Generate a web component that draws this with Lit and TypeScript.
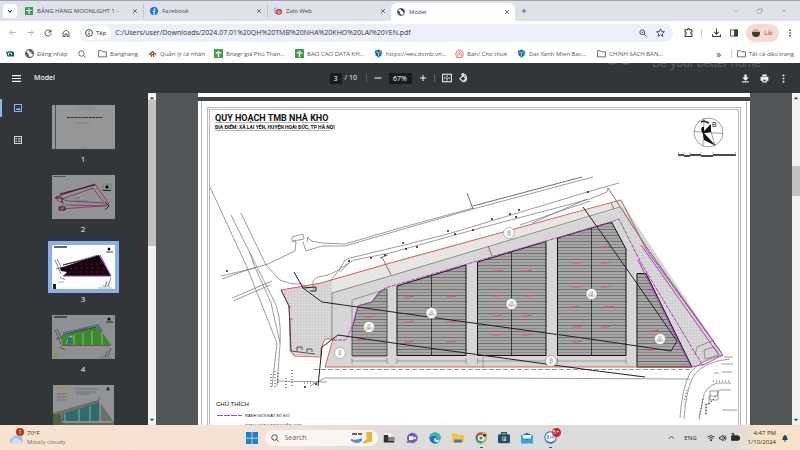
import { LitElement, html, svg, css, TemplateResult } from "lit";
import { customElement, property } from "lit/decorators.js";
import { classMap } from "lit/directives/class-map.js";

type Art = TemplateResult;

const icon = (size: number, body: Art) =>
  html`<svg width=${size} height=${size} viewBox="0 0 16 16" fill="none" stroke="currentColor" stroke-width="1.7" style="flex:none" aria-hidden="true">${body}</svg>`;

const art = {
  sheets: svg`<rect width="16" height="16" rx="1" fill="#3c9f4a" stroke="none"/><path d="M8 3v11M3 7h10" stroke="#fff" stroke-width="2.4"/>`,
  facebook: svg`<circle cx="8" cy="8" r="8" fill="#1b6fe4" stroke="none"/><path d="M11 4.2H9.6Q8.2 4.2 8.2 6v10M5.5 9h5" stroke="#fff" stroke-width="2.2"/>`,
  zalo: svg`<path d="M2 1v9q0 4 5 4" stroke="#3b8ee8" stroke-width="2"/><circle cx="10" cy="9.500" r="6" fill="#d8343c" stroke="none"/><path d="M8 12V9q2-4 4 0v3z" stroke="#fff" stroke-width="1.300"/>`,
  globe: svg`<circle cx="8" cy="8" r="7" stroke-width="1.800"/><path d="M2 5l4 3v3l2 1v3L4 13 1 8zM7 1l1 4 3 1 1 3 3 0-1-5-4-3z" fill="currentColor" stroke="none"/>`,
  close: svg`<path d="M3 3l10 10M13 3L3 13" stroke-width="2"/>`,
  plus: svg`<path d="M8 2v12M2 8h12" stroke-width="2"/>`,
  minus: svg`<path d="M1 8h14" stroke-width="2"/>`,
  chevron: svg`<path d="M3 6l5 5 5-5" stroke-width="2.800"/>`,
  up: svg`<path d="M2 11l6-6 6 6"/>`,
  back: svg`<path d="M15 8H2M8 2L2 8l6 6"/>`,
  forward: svg`<path d="M1 8h13M8 2l6 6-6 6"/>`,
  reload: svg`<path d="M14 9a6 6 0 1 1-2-5.500L14 6M14 1v5H9"/>`,
  home: svg`<path d="M2 7l6-5 6 5v8h-4v-5H6v5H2z"/>`,
  info: svg`<circle cx="8" cy="8" r="6.800"/><path d="M8 7v5M8 4v1.500"/>`,
  zoom: svg`<circle cx="6.500" cy="6.500" r="4.800"/><path d="M10 10l5 5M4.500 6.500h4"/>`,
  search: svg`<circle cx="7" cy="7" r="5.500"/><path d="M11 11l4 4"/>`,
  star: svg`<path d="M8 1.500l2 4.700 5 .4-3.800 3.300 1.200 5L8 12.200l-4.400 2.700 1.200-5L1 6.600l5-.4z" stroke-width="1.500"/>`,
  puzzle: svg`<path d="M2 3h4q0-2 2-2t2 2h4v4q-2 0-2 2t2 2v4H2v-4q2 0 2-2T2 7z" stroke-width="2"/>`,
  download: svg`<path d="M8 1v9M4 7l4 4 4-4M1 11v4h14v-4" stroke-width="1.900"/>`,
  panel: svg`<rect x="1" y="2" width="14" height="12"/><path d="M9 2h6v12H9z" fill="currentColor"/>`,
  dots: svg`<path d="M8 1v3M8 6.500v3M8 12v3" stroke-width="3"/>`,
  folder: svg`<path d="M1 3h5l2 2h7v9H1z" stroke-width="1.500"/>`,
  cen: svg`<path d="M0 4l10-2 6 2v9H3z" fill="#11605f" stroke="none"/><path d="M5 11V6h6v4" stroke="#e8f6f4"/>`,
  roof: svg`<path d="M1 9l7-6 7 6-2 2-5-4-5 4z" fill="#bd5a33" stroke="none"/><path d="M6 14v-4h4v4" stroke="#493128"/>`,
  drop: svg`<path d="M1 3l7-2 7 3-2 7-5 5-5-5z" fill="#2c6c9c" stroke="none"/><path d="M3 4l5 3 6-3M8 7v8" stroke="#8dc8dc"/>`,
  house: svg`<path d="M1 9q2-7 7-8 5 1 7 8l-2 6H3z" stroke="#d77a74"/><path d="M4 8l4-4 4 4M5 13V9h6v4" stroke="#d77a74"/>`,
  menu: svg`<path d="M0 3h16M0 8h16M0 13h16" stroke-width="2.200"/>`,
  fit: svg`<rect x="1" y="2" width="14" height="12"/><path d="M8 4v2M8 7v2M8 10v2M3.500 8h2M10.500 8h2" stroke-width="2.200"/>`,
  rotate: svg`<path d="M8 4l5 5-5 5-5-5z"/><path d="M8 1.500a7 7 0 0 1 2 13M9 0L6 2l3 3"/>`,
  save: svg`<path d="M6 1h4v5h4l-6 6-6-6h4z" fill="currentColor" stroke="none"/><path d="M2 14h12" stroke-width="2"/>`,
  print: svg`<path d="M4 1h8v3H4zM1 5h14v7h-3v3H4v-3H1z" fill="currentColor" stroke="none"/><path d="M6 10h4v3H6z" fill="#323639" stroke="none"/>`,
  thumbs: svg`<rect x="1" y="1" width="14" height="14" stroke-width="2"/><path d="M3 12l3-4 2 2 3-3 2 5z" fill="currentColor" stroke="none"/>`,
  outline: svg`<rect x="1" y="1" width="14" height="14" stroke-width="2"/><path d="M3 5h3M8 5h5M3 8h3M8 8h5M3 11h3M8 11h5"/>`,
  wifi: svg`<path d="M1 6q7-6 14 0M3.500 9q4.500-4 9 0M6 12q2-2 4 0l-2 2z" stroke-width="1.800"/>`,
  sound: svg`<path d="M1 6h3l4-4v12l-4-4H1zM10 5q3 3 0 6M12 3q5 5 0 10"/>`,
  battery: svg`<path d="M1 5h12v8H1zM14 7h2v4h-2zM1 1h4v4" fill="currentColor"/>`,
  bell: svg`<path d="M2 12q2-2 2-6 4-8 8 0 0 4 2 6zM6 13h4v2H6z" fill="#12505f" stroke="none"/>`,
  windows: svg`<path d="M0 0h7.500v7.500H0zM8.500 0H16v7.500H8.500zM0 8.500h7.500V16H0zM8.500 8.500H16V16H8.500z" fill="#1683d4" stroke="none"/>`,
  task: svg`<path d="M1 2h10v8H1z" fill="#f5f5f5" stroke="none"/><path d="M1 4v10h14V7H7V4z" fill="#303030" stroke="none"/><path d="M7 7h8v5H7z" fill="#8a8a8a" stroke="none"/>`,
  chat: svg`<path d="M8 1a7 7 0 1 1-3 13l-4 1 1-4A7 7 0 0 1 8 1z" fill="#6f61c2" stroke="none"/><path d="M4 5.500h6v5H4zM10 8l3-2v4z" fill="#fff" stroke="none"/>`,
  edge: svg`<circle cx="8" cy="8" r="7.500" fill="#1877bd" stroke="none"/><path d="M1 7Q3 0 9 .8q7 1 6.500 7-1 3-5 2.200 1-5-3-5Q3 5 1 7z" fill="#36bcb2" stroke="none"/><path d="M15 10q-7 2-6-3-4 3-1 6 4 2 7-3z" fill="#e1eff3" stroke="none"/>`,
  files: svg`<path d="M0 2h6l2 2h8v10H0z" fill="#f5c23c" stroke="none"/><path d="M3 10h10v4H3z" fill="#2d7cc4" stroke="none"/>`,
  chrome: svg`<circle cx="8" cy="8" r="7.500" fill="#3aa354" stroke="none"/><path d="M1.500 4.300A7.500 7.500 0 0 1 15 5H8L4 9z" fill="#dc473a" stroke="none"/><path d="M15 5q1 7-6 10.500L12 8 9 5z" fill="#f2c332" stroke="none"/><circle cx="8" cy="8" r="3.200" fill="#397fe5" stroke="#fff"/><circle cx="12.500" cy="3" r="3" fill="#c9b968" stroke="none"/><path d="M10 3h5v3h-4z" fill="#3c372b" stroke="none"/>`,
  store: svg`<path d="M5 3V1h6v2" stroke="#1c597e"/><rect y="3" width="16" height="12" rx="2" fill="#1b4f78" stroke="none"/><path d="M5 6h3v3H5z" fill="#e26a42" stroke="none"/><path d="M8 6h3v3H8z" fill="#84b842" stroke="none"/><path d="M5 9h3v3H5z" fill="#3da2dc" stroke="none"/><path d="M8 9h3v3H8z" fill="#ebbb3a" stroke="none"/>`,
  mail: svg`<path d="M0 5l8-4 8 4v10H0z" fill="#186eaf" stroke="none"/><path d="M2 4h12v5H2z" fill="#e8f3f8" stroke="none"/><path d="M0 6l8 5 8-5v9H0z" fill="#36a6dc" stroke="none"/>`,
  zaloApp: svg`<circle cx="8" cy="8" r="7" fill="#f3f8ff" stroke="#2774cf" stroke-width="1.300"/><path d="M4 6h2l-2 3h2M8 7v2M10 6v3M12 7v2" stroke="#2774cf" stroke-width="1"/><path d="M2 11q6 5 12 0-3 5-6 4-4 0-6-4z" fill="#2774cf" stroke="none"/>`,
  cloud: svg`<path d="M3 14a3 3 0 0 1 0-6q2-5 6-2 5-1 5 3 2 4-1 5z" fill="#9fbfef" stroke="none"/><path d="M3 14a3 3 0 0 1 1-5q4-3 6 1 4 0 4 4z" fill="#cfe0fb" stroke="none"/>`,
};

/* Site outline shared by the thumbnails, on a 63 x 44 sheet */
const miniRoads = svg`<g fill="none" stroke="#333" stroke-width=".6"><path d="M3 15l6 14M5 14l6 12M4 24l7-2M11 20L46 10M8 32l5 3M55 36l-2 6M59 33l-3 8"/><path d="M11 20L45 12" stroke-width="1.200"/><path d="M2 2h13" stroke-width="1.500"/></g><circle cx="57" cy="4" r="1.500" fill="#111"/><path d="M54 7h7" stroke="#111" stroke-width=".8"/>`;

const thumbs: Art[] = [
  svg`<rect width="63" height="44" fill="#949698"/><path d="M3.500 0v44" stroke="#333" stroke-width=".7"/><path d="M26 2h18M29 4h13M24 18h14M31 42h4" stroke="#7d7f81" stroke-width=".8"/><path d="M15 12.500h36" stroke="#333" stroke-width="1.200" stroke-dasharray="3 .6"/>`,
  svg`<rect width="63" height="44" fill="#929395"/><path d="M1 1.500h13" stroke="#555" stroke-width="1"/><path d="M4 22L43 9 57 29 49 31 8 34 12 28 6 26z" fill="none" stroke="#ad3159" stroke-width="1"/><path d="M10 24L41 13 52 28 15 26zM4 22l5-1M8 20L43 9M13 30l42 1" fill="none" stroke="#6f2f64" stroke-width=".8"/><path d="M8 19l35-9M3 23h7v4M7 32h6v3H7zM53 27l4 4-4 4" fill="none" stroke="#222" stroke-width="1"/><path d="M24 26h12M22 23h6" stroke="#58608e" stroke-width=".7"/><path d="M51 9h8v6h-8z" fill="none" stroke="#666" stroke-width=".5"/><circle cx="55" cy="12" r="1.700" fill="#111"/><path d="M51 15.500h8" stroke="#222"/>`,
  svg`<rect width="63" height="44" fill="#fff"/>${miniRoads}<path d="M8 23L47 10 59 31 11 31 15 27 9 26z" fill="#170612"/><path d="M48 10l11 21M11 31h48" stroke="#a633a6" stroke-width="1"/><path d="M18 23h34M17 27h36M28 19h20" stroke="#9b2348" stroke-width=".8" stroke-dasharray="1.500 4"/><path d="M1 39h3v5H1z" fill="#222"/><path d="M46 43h14M6 37h6M50 41h8" stroke="#777" stroke-width=".6"/>`,
  svg`<rect width="63" height="44" fill="#8f9092"/>${miniRoads}<path d="M10 20L47 12 59 30 10 30z" fill="#3d8a2c"/><path d="M11 18L46 10 50 16" fill="none" stroke="#5a65a0" stroke-width="1.600"/><path d="M14 29l3-7 3-1-1 7M22 20v10M31 18v12M40 16v14M50 17v13" fill="none" stroke="#a8c8c0" stroke-width=".7"/><path d="M16 23l4 5M16 28l4-5" stroke="#2d51a3" stroke-width="1.500"/><path d="M10 30.500h48" stroke="#783b38" stroke-width=".8"/><path d="M2 38h3v4H2z" fill="#6f9e3c"/><path d="M46 43h14M50 41h8" stroke="#666" stroke-width=".6"/>`,
  svg`<rect x="1" width="61" height="44" fill="#929394"/><path d="M3 3h12" stroke="#a6903a" stroke-width="1.500"/><path d="M22 4h24M24 7h20M24 9h14M5 9h10M5 12h10M5 15h10" stroke="#626466" stroke-width=".7"/><circle cx="56" cy="4" r="1.700" fill="#26333c"/><path d="M1 28L46 15 62 37v7H1z" fill="#697066"/><path d="M11 29L48 17V36H11z" fill="#2c6c6c"/><path d="M13 29v7M27 24v12M38 21v15M48 17v20M11 37h50" stroke="#b4beb8" stroke-width=".8"/><path d="M1 29h8v11H1z" fill="#51603d"/><path d="M46 16l2-4M5 39h56" stroke="#555" stroke-width=".8"/>`,
];

const tag = (x: number, y: number, a: string, b: string) =>
  svg`<circle cx=${x} cy=${y} r="5.500" fill="#fff" stroke="#777" stroke-width=".5"/><text x=${x} y=${y} class="tag">${a}</text><text x=${x} y=${y + 3} class="tag">${b}</text>`;

/* short red level marks inside the warehouses */
const marks = [
  [370, 316], [409, 296], [451, 296], [409, 321], [451, 321], [409, 341], [451, 341],
  [497, 270], [527, 270], [497, 295], [529, 295], [497, 315], [527, 315], [497, 334], [527, 334],
  [577, 262], [606, 262], [577, 286], [606, 286], [574, 306], [609, 306], [577, 326], [606, 326],
  [654, 330], [652, 349], [577, 341], [606, 246], [361, 339],
];

const plan = svg`
  <defs>
    <pattern id="roof" width="8" height="6" patternUnits="userSpaceOnUse">
      <rect width="8" height="6" fill="#a6a6a6"/><path d="M0 1.500h8" stroke="#707070" stroke-width="1"/><path d="M0 4.500h8" stroke="#8e8e8e" stroke-width="1"/>
    </pattern>
    <pattern id="grid" width="3" height="3" patternUnits="userSpaceOnUse">
      <rect width="3" height="3" fill="#dadada"/><path d="M0 .5h3M.5 0v3" stroke="#c9c9c9" stroke-width=".5"/>
    </pattern>
    <pattern id="verge" width="3" height="3" patternUnits="userSpaceOnUse">
      <rect width="3" height="3" fill="#ececea"/><path d="M0 3L3 0" stroke="#cecaca" stroke-width=".5"/>
    </pattern>
  </defs>
  <g fill="none" stroke="#b6b8bc" stroke-width="1">
    <path d="M201.500 101V425M746.500 101V425"/>
    <path d="M207.500 425V107.500H740.500V425"/><path d="M209.500 425V109.500H738.500V425"/>
    <path d="M215 122.500H328M215 130.500H330"/>
  </g>
  <text x="215" y="121" class="title">QUY HOẠCH TMB NHÀ KHO</text>
  <text x="215" y="129" class="sub">ĐỊA ĐIỂM: XÃ LẠI YÊN, HUYỆN HOÀI ĐỨC, TP HÀ NỘI</text>

  <circle cx="708.500" cy="132.500" r="14.500" fill="#fff" stroke="#777" stroke-width=".7"/>
  <path d="M694 131.500l29 2M704 118l-1 28M709 125l6 20" stroke="#666" stroke-width=".6"/>
  <path d="M704 131l7-7v8l-7 1 12 13-12-6-1-6-2-4 1-3h2z" fill="#111"/>
  <path d="M701 122l3-1 5 2" stroke="#222" fill="none" stroke-width="1.500"/><text x="712" y="127" class="north">B</text>
  <path d="M678 155h6M690 155h11M713 155h23" stroke="#111" stroke-width="1.600"/><path d="M684 156h6M701 156h12" stroke="#111" stroke-width="1.600"/>
  <path d="M678.500 152v3M684 152v2M690 152v2M701 152v3M713 152v3M735.500 152v3" stroke="#999" stroke-width=".7"/>

  <path d="M281 290L321 283 390 263 621 201 723 355 692 367H325L333 339H325L321 348V356L292 355 289 306z" fill="#d6d6d6"/>
  <path d="M281 290L321 283 332 280V340L325 339 321 348V356L292 355 289 306z" fill="url(#grid)"/>
  <path d="M332 280L621 201 625 207 390 276 332 293z" fill="url(#verge)"/>
  <path d="M621 207L646 249 723 355 692 367 637 255z" fill="url(#grid)"/>
  <path d="M325 339L321 348V357L325 366 333 339z" fill="#fff"/>
  <path d="M332 340V293L390 276 620 207" fill="none" stroke="#777" stroke-width=".8"/>

  <g fill="none" stroke="#727272" stroke-width=".7">
    <path d="M210 187L246 265 277 343 272 387M231 215L250 253 272 297Q282 312 280 345L277 386M241 213L266 265 280 280Q291 285 300 284"/>
    <path d="M250 253l4 12 17 38 9 40M221 276L255 268M222 279L247 270 268 264 295 251 296 242 292 241 292 237 303 234 304 239 293 241M303 242L306 251 322 246H345L400 230 473 209 593 177"/>
    <path d="M311 241l11 2 23 1 55-16 73-20M307 242l1-5 3 4M232 298L272 281M233 301l37-16"/>
    <path d="M467 193L473 209M473 206L582 177" stroke="#333"/>
    <path d="M300 283q5 4 9 5M314 290q-4-10 4-13l10-2 11-5 6-10 5-2 50-12 48-12L594 190 619 183"/>
    <path d="M330 281l11-13 13-8 36-7 83-23L590 199 607 192 608 188M340 272l9-9M532 223L587 199M520 225l70-24"/>
    <path d="M608 188L645 245 721 352M382 257l9 18M488 246l4 10M611 203l3 6M380 258l8-3" stroke="#444"/>
    <path d="M310 386l15-8H480L690 379M277 381l50 1M290 318v34M293 319h-3" />
    <path d="M723 355Q700 360 690 373 682 388 680 418M730 359Q705 361 694 375 686 389 684 419M731 383h-14Q704 387 703 399L699 420M731 390H719L717 396H709V404H706V415M724 357h9M721 364h12M714 373h5M722 372h10M722 410h15" />
    <path d="M710 391h8v9h-8zM697 347l17-7M695 355l2-8M704 350l10-3 5 8-14 4z"/>
  </g>
  <g fill="none" stroke="#555" stroke-width="1.200" stroke-dasharray="1 2"><path d="M687 390l-3 12M713 381h17M703 399l-4 18M706 404v12M709 404l7-8M271 374v14M275 371v16M278 373v12M286 378v10M292 370v18M304 383h10"/></g>

  <path d="M352 329L358 306 372 302 380 291 387 289V356H352z" fill="url(#roof)" stroke="#333" stroke-width=".8"/>
  <path d="M352 329V300L387 289" fill="none" stroke="#777" stroke-width=".7"/>
  <g fill="url(#roof)" stroke="#111" stroke-width="1">
    <path d="M397 286L466 265V355.500H397z"/><path d="M477.500 262L546 241.500V355.500H477.500z"/>
    <path d="M557.500 238L611.500 222 626 249V355.500H557.500z"/><path d="M637 273.500H646L692 367H637z"/>
  </g>
  <path d="M431.500 276V355M511.500 252V355M591.500 228V355" stroke="#222" stroke-width=".8"/>
  <g stroke="#d4566a" stroke-width="1">${marks.map(([x, y]) => svg`<path d=${`M${x - 5} ${y + 1}h5l5 -1`} fill="none"/>`)}</g>
  <path d="M352 361H387M397 361H466M477.500 361H546M557.500 361H626" stroke="#777" stroke-width=".6"/>
  <path d="M352 358v6M387 358v6M397 358v6M466 358v6M477.500 358v6M546 358v6M557.500 358v6M626 358v6M483 356v12" stroke="#777" stroke-width=".6"/>

  <path d="M333 339L325 367H692M325 339H333M325 339L321 348V357L294 356 291 351 289 306 281 290 321 283 390 263 580 211 621 200 646 249" fill="none" stroke="#d84c50" stroke-width=".9"/>
  <path d="M289 306L291 351 315 354M290 308L281 290M297 351v-4h5v3M307 352v-3h5v3" fill="none" stroke="#333" stroke-width=".8"/>
  <g fill="none" stroke="#b43fb8" stroke-width="1">
    <path d="M333 340H346L352 327 358 306 372 302 385 288 611 222 619 219 641 263 703 366" stroke-dasharray="4 1"/>
    <path d="M638 260L691 367M646 249L723 355 705 364 692 367M641 245L719 355"/>
  </g>
  <path d="M314 369.500H690" stroke="#999" stroke-dasharray="5 2"/>
  <g fill="none" stroke="#222" stroke-width="1">
    <path d="M294 272L303 288 322 302 400 313 590 339 671 351 677 341 624 265 583 207"/>
    <path d="M318 386L322 347 338 335 400 344 590 370 645 377"/><path d="M303 288l13-1v4h-6"/>
  </g>
  <g fill="#222">${[[227, 271], [349, 261], [371, 258], [385, 255], [403, 243], [406, 249], [417, 247], [448, 231], [455, 234], [473, 230], [492, 219], [510, 214], [516, 217], [519, 210], [588, 192], [316, 384], [305, 387]].map(([x, y]) => svg`<circle cx=${x} cy=${y} r="1"/>`)}</g>
  ${tag(509, 233, "06", "CX")}${tag(369, 327, "01", "KHO")}${tag(431.5, 313, "02", "KHO")}${tag(511.5, 304, "03", "KHO")}${tag(591.5, 294, "04", "KHO")}${tag(660, 339, "05", "KHO")}${tag(340, 353, "07", "P")}${tag(551, 361, "08", "GT")}

  <text x="216" y="406" class="legend">CHÚ THÍCH:</text>
  <path d="M217 415.500H242" stroke="#b43fb8" stroke-dasharray="6 1"/>
  <text x="245" y="417" class="note">RANH GIỚI ĐẤT SỔ ĐỎ</text>
  <text x="245" y="427" class="note">RANH GIỚI ĐẤT NGHIÊN CỨU</text>`;

@customElement("browser-tabs")
export class BrowserTabs extends LitElement {
  @property({ attribute: false }) tabs: { name: string; art: Art; active?: boolean }[] = [];
  static styles = css`
    :host { display: flex; height: 21px; background: #dee2eb; border-top: 1px solid #a3a3ad; box-sizing: border-box; color: #44474c; }
    button { border: 0; padding: 0; margin: 0; background: none; color: inherit; font: inherit; display: grid; place-items: center; }
    .menu { width: 14px; height: 14px; margin: 3px 2px 3px 3px; background: #fff; border-radius: 4px; color: #222; }
    .tab { flex: 0 1 124px; min-width: 0; box-sizing: border-box; display: flex; align-items: center; gap: 4px; padding: 0 5px 0 6px; }
    .tab + .tab:not(.active) { border-left: 1px solid #c5c9d2; }
    .tab:not(.active) { height: 14px; margin-top: 3px; }
    .active { background: #fff; border-radius: 6px 6px 0 0; margin-top: 2px; }
    .name { flex: 1; overflow: hidden; white-space: nowrap; }
    .add { width: 18px; height: 20px; }
    .win { margin-left: auto; display: flex; color: #a2a6ae; padding-right: 4px; }
    .win button { width: 24px; }
  `;
  render() {
    return html`<button class="menu" aria-label="Tabs">${icon(6, art.chevron)}</button>
      ${this.tabs.map((t) => html`<div class=${classMap({ tab: true, active: !!t.active })}>${icon(8, t.art)}<span class="name">${t.name}</span><button aria-label="Close tab">${icon(6, art.close)}</button></div>`)}
      <button class="add" aria-label="New tab">${icon(6, art.plus)}</button>
      <div class="win"><button aria-label="Minimize">${icon(6, art.minus)}</button><button aria-label="Restore">${icon(6, svg`<rect x="2" y="4" width="10" height="10"/><path d="M5 2h9v9"/>`)}</button><button aria-label="Close">${icon(6, art.close)}</button></div>`;
  }
}

@customElement("pdf-viewer")
export class PdfViewer extends LitElement {
  static styles = css`
    :host { display: flex; flex-direction: column; min-height: 0; background: #323639; color: #f1f1f1; }
    button { border: 0; padding: 0; margin: 0; background: none; color: inherit; font: inherit; display: grid; place-items: center; }
    svg { display: block; }
    .bar { height: 30px; flex: none; display: grid; grid-template-columns: 1fr auto 1fr; align-items: center; position: relative; overflow: hidden; }
    .left { display: flex; align-items: center; gap: 13px; padding-left: 12px; font-size: 7px; font-weight: 600; }
    .mid { display: flex; align-items: center; font-size: 7px; }
    .mid input { box-sizing: border-box; height: 11px; border: 0; padding: 0; background: #191b1c; color: #fff; font: inherit; text-align: center; }
    .page { width: 12px; } .level { width: 23px; margin: 0 4px; }
    .of { width: 20px; padding-left: 3px; box-sizing: border-box; white-space: nowrap; }
    .sep { width: 1px; height: 8px; background: #5b5e61; margin: 0 4px; }
    .mid button { width: 14px; height: 14px; } .wide { margin: 0 1px; }
    .right { display: flex; justify-content: flex-end; padding-right: 12px; gap: 10px; }
    .mark { position: absolute; right: 39px; top: -7px; font: 12px/14px "Liberation Sans", sans-serif; color: #5d6165; white-space: nowrap; display: flex; gap: 16px; }
    .main { flex: 1; min-height: 0; display: flex; }
    .rail { width: 36px; flex: none; display: flex; flex-direction: column; padding-top: 6px; box-sizing: border-box; gap: 14px; color: #d4d5d6; }
    .rail button { height: 18px; width: 36px; }
    .rail .on { color: #8ab4f8; border-left: 2px solid #8ab4f8; padding-right: 2px; }
    .list { width: 112px; flex: none; overflow: hidden; padding: 12px 18px 0 0; box-sizing: border-box; }
    .item { width: 100%; height: 70px; align-content: start; font-size: 8px; line-height: 12px; row-gap: 4px; }
    .item.sel svg { outline: 4px solid #8aaef0; }
    .track { width: 8px; flex: none; background: #f1f1f1; display: flex; flex-direction: column; align-items: center; justify-content: space-between; color: #444; box-sizing: border-box; padding: 3px 0; position: relative; }
    .thumb { position: absolute; left: 0; right: 0; background: #c1c1c1; top: 2%; height: 44%; }
    .far .thumb { top: 22%; height: 9%; }
    .view { flex: 1; min-width: 0; background: #525659; overflow: hidden; padding: 0 42px; }
    .prev { height: 4px; background: #fff; border-bottom: 4px solid #424548; }
    .sheet { background: #fff; }
    .sheet svg { width: 100%; }
    text { font-family: "Liberation Sans", sans-serif; fill: #111; }
    .title, .sub { font-family: Roboto, "Liberation Sans", sans-serif; font-weight: 700; }
    .title { font-size: 9px; } .sub { font-size: 5px; }
    .north { font-size: 7px; } .legend { font-size: 6px; } .note { font-size: 4px; }
    .tag { font-size: 3px; text-anchor: middle; fill: #555; }
  `;
  render() {
    return html`<header class="bar">
        <div class="mark"><svg width="34" height="14" viewBox="0 0 34 14" fill="none" stroke="#5d6165" stroke-width="3"><circle cx="10" cy="0" r="7"/><circle cx="24" cy="0" r="7"/></svg>Be your better home</div>
        <div class="left"><button aria-label="Menu">${icon(9, art.menu)}</button>Model</div>
        <div class="mid">
          <input class="page" aria-label="Page" value="3" /><span class="of">/ 10</span><span class="sep"></span>
          <button aria-label="Zoom out">${icon(8, art.minus)}</button><input class="level" aria-label="Zoom level" value="67%" /><button aria-label="Zoom in">${icon(8, art.plus)}</button>
          <span class="sep"></span><button class="wide" aria-label="Fit to page">${icon(10, art.fit)}</button><button class="wide" aria-label="Rotate">${icon(10, art.rotate)}</button>
        </div>
        <div class="right"><button aria-label="Download">${icon(9, art.save)}</button><button aria-label="Print">${icon(9, art.print)}</button><button aria-label="More">${icon(9, art.dots)}</button></div>
      </header>
      <div class="main">
        <nav class="rail"><button class="on" aria-label="Thumbnails">${icon(8, art.thumbs)}</button><button aria-label="Outline">${icon(8, art.outline)}</button></nav>
        <div class="list">${thumbs.map((t, i) => html`<button class=${classMap({ item: true, sel: i === 2 })}><svg width="63" height="44" viewBox="0 0 63 44">${t}</svg>${i + 1}</button>`)}</div>
        <div class="track"><div class="thumb"></div>${icon(4, svg`<path d="M1 12L8 4l7 8z" fill="currentColor"/>`)}${icon(4, svg`<path d="M1 4l7 8 7-8z" fill="currentColor"/>`)}</div>
        <main class="view"><div class="prev"></div><div class="sheet"><svg viewBox="198 101 552 380">${plan}</svg></div></main>
        <div class="track far"><div class="thumb"></div>${icon(4, svg`<path d="M1 12L8 4l7 8z" fill="currentColor"/>`)}${icon(4, svg`<path d="M1 4l7 8 7-8z" fill="currentColor"/>`)}</div>
      </div>`;
  }
}

@customElement("task-bar")
export class TaskBar extends LitElement {
  static styles = css`
    :host { height: 25px; flex: none; display: grid; grid-template-columns: 1fr auto 1fr; align-items: center; color: #2b2b2d; background: linear-gradient(90deg, #f8e3d0 0, #f6e1d6 32%, #dddbdc 52%, #dcdcdc 92%, #f7e2c8 95%); }
    button { border: 0; padding: 0; margin: 0; background: none; color: inherit; font: inherit; display: grid; place-items: center; }
    .weather { display: flex; align-items: center; gap: 3px; padding-left: 10px; line-height: 9px; position: relative; text-align: left; justify-self: start; }
    .weather div { color: #77716c; white-space: nowrap; } .weather b { font-weight: 400; color: #2b2b2d; }
    .badge { position: absolute; width: 8px; height: 8px; border-radius: 50%; background: #c42b1f; color: #fff; font-size: 6px; line-height: 8px; text-align: center; left: 16px; top: -1px; }
    .apps { display: flex; align-items: center; }
    .apps > button { width: 23px; height: 20px; position: relative; }
    .apps > .start { width: 26px; }
    .search { width: 113px; height: 16px; box-sizing: border-box; background: #faf5f2; border-radius: 8px; display: flex; align-items: center; gap: 6px; padding: 0 3px 0 6px; }
    .search input { flex: 1; min-width: 0; border: 0; padding: 0; background: none; font: inherit; font-size: 7px; outline: 0; }
    .search input::placeholder { color: #666; opacity: 1; }
    .run::after { content: ""; position: absolute; bottom: 0; width: 3px; height: 1px; background: #555; }
    .count { position: absolute; right: 1px; top: 0; width: 9px; height: 9px; border-radius: 50%; background: #d3202b; color: #fff; font-size: 6px; line-height: 9px; }
    .tray { display: flex; justify-content: flex-end; align-items: center; gap: 4px; padding-right: 11px; }
    .lang { margin: 0 6px 0 5px; }
    .clock { text-align: right; line-height: 9px; margin: 0 1px 0 4px; white-space: nowrap; }
  `;
  render() {
    const apps: [string, Art][] = [["Task view", art.task], ["Chat", art.chat], ["Edge", art.edge], ["Files", art.files], ["Chrome", art.chrome], ["Store", art.store], ["Mail", art.mail]];
    return html`<button class="weather">${icon(14, art.cloud)}<span class="badge">1</span><div><b>70°F</b><br />Mostly cloudy</div></button>
      <div class="apps">
        <button class="start" aria-label="Start">${icon(12, art.windows)}</button>
        <label class="search">${icon(8, art.search)}<input aria-label="Search" placeholder="Search" />
          <svg width="26" height="14" viewBox="0 0 26 14"><path d="M3 3h5M9 3h4" stroke="#73558f" stroke-width="2"/><path d="M2 8q5 2 11-1v3q-5 4-11 0z" fill="#4a97d3"/><path d="M17 1h6v10h-3l-6 2v-2l4-3z" fill="#e9b62c"/></svg></label>
        ${apps.map(([n, a]) => html`<button class=${n === "Chrome" ? "run" : ""} aria-label=${n}>${icon(12, a)}</button>`)}
        <button class="run" aria-label="Zalo">${icon(13, art.zaloApp)}<span class="count">5+</span></button>
      </div>
      <div class="tray">${icon(7, art.up)}<span class="lang">ENG</span>${icon(8, art.wifi)}${icon(8, art.sound)}${icon(9, art.battery)}<div class="clock">4:47 PM<br />1/10/2024</div>${icon(8, art.bell)}</div>`;
  }
}

@customElement("app-root")
export class AppRoot extends LitElement {
  static styles = css`
    :host { display: flex; flex-direction: column; height: 100vh; overflow: hidden; font: 6px/10px "Open Sans", "Noto Sans", sans-serif; background: #fff; color: #45484d; }
    pdf-viewer { flex: 1; }
    button { border: 0; padding: 0; margin: 0; background: none; color: inherit; font: inherit; display: grid; place-items: center; }
    .tools { height: 23px; flex: none; display: flex; align-items: center; padding: 0 2px 0 3px; color: #3b3e43; }
    .tools > button { width: 18px; height: 18px; }
    .tools > .off { color: #9a9da3; }
    .omni { flex: 1; min-width: 0; height: 18px; margin: 0 6px 0 5px; background: #edf0fa; border-radius: 9px; display: flex; align-items: center; gap: 9px; padding-right: 8px; }
    .chip { background: #fff; border-radius: 8px; height: 14px; margin-left: 2px; padding: 0 5px 0 3px; display: flex; align-items: center; gap: 3px; color: #222; }
    .omni input { flex: 1; min-width: 0; border: 0; padding: 0; background: none; font: inherit; font-size: 7px; color: #333; margin-left: -5px; }
    .sep { width: 1px; height: 8px; background: #c9cdd6; margin: 0 5px 0 4px; }
    .tools > .me { width: 33px; height: 18px; background: #f8d9d8; border-radius: 9px; display: flex; align-items: center; justify-content: center; gap: 4px; margin: 0 3px; color: #8c3836; }
    .face { width: 8px; height: 8px; border-radius: 50%; background: linear-gradient(#b9bd80 40%, #3b4034 40%); }
    .tools > .more { width: 16px; }
    .marks { height: 19px; flex: none; display: flex; align-items: center; padding: 0 6px; }
    .links { display: grid; grid-template-columns: 19px 53px 20px 50px 66px 81px 79px 81px 62px 80px 72px; flex: 1; min-width: 0; }
    a { display: flex; align-items: center; gap: 3px; color: #55585e; text-decoration: none; white-space: nowrap; }
    .rest { font-size: 10px; width: 12px; margin-right: 2px; }
  `;
  render() {
    const tabs = [
      { name: "BẢNG HÀNG MOONLIGHT 1 -", art: art.sheets },
      { name: "Facebook", art: art.facebook },
      { name: "Zalo Web", art: art.zalo },
      { name: "Model", art: art.globe, active: true },
    ];
    const links: [Art, string][] = [
      [art.cen, ""], [art.globe, "Đăng nhập"], [art.search, ""], [art.folder, "Banghang"], [art.roof, "Quản lý cá nhân"],
      [art.sheets, "Bnagr giá Phú Than..."], [art.sheets, "BAO CAO DATA KH..."], [art.drop, "https://ees.dxmb.vn..."],
      [art.house, "Bán/ Cho thuê"], [art.drop, "Dat Xanh Mien Bac..."], [art.folder, "CHÍNH SÁCH BÁN..."],
    ];
    return html`<browser-tabs .tabs=${tabs}></browser-tabs>
      <div class="tools">
        <button class="off" aria-label="Back">${icon(7, art.back)}</button><button class="off" aria-label="Forward">${icon(7, art.forward)}</button>
        <button aria-label="Reload">${icon(8, art.reload)}</button><button aria-label="Home">${icon(8, art.home)}</button>
        <div class="omni"><span class="chip">${icon(8, art.info)}Tệp</span><input aria-label="Address" value="C:/Users/user/Downloads/2024.07.01%20QH%20TMB%20NHA%20KHO%20LAI%20YEN.pdf" /><button aria-label="Zoom">${icon(8, art.zoom)}</button><button aria-label="Bookmark">${icon(9, art.star)}</button></div>
        <button aria-label="Extensions">${icon(9, art.puzzle)}</button><span class="sep"></span><button aria-label="Downloads">${icon(9, art.download)}</button><button aria-label="Side panel">${icon(8, art.panel)}</button>
        <button class="me"><span class="face"></span>Lỗi</button><button class="more" aria-label="More">${icon(8, art.dots)}</button>
      </div>
      <nav class="marks"><div class="links">${links.map(([a, n]) => html`<a href="#" aria-label=${n || "Bookmark"}>${icon(n ? 9 : 8, a)}${n}</a>`)}</div>
        <button class="rest" aria-label="More bookmarks">»</button><span class="sep"></span><a href="#">${icon(9, art.folder)}Tất cả dấu trang</a></nav>
      <pdf-viewer></pdf-viewer>
      <task-bar></task-bar>`;
  }
}
